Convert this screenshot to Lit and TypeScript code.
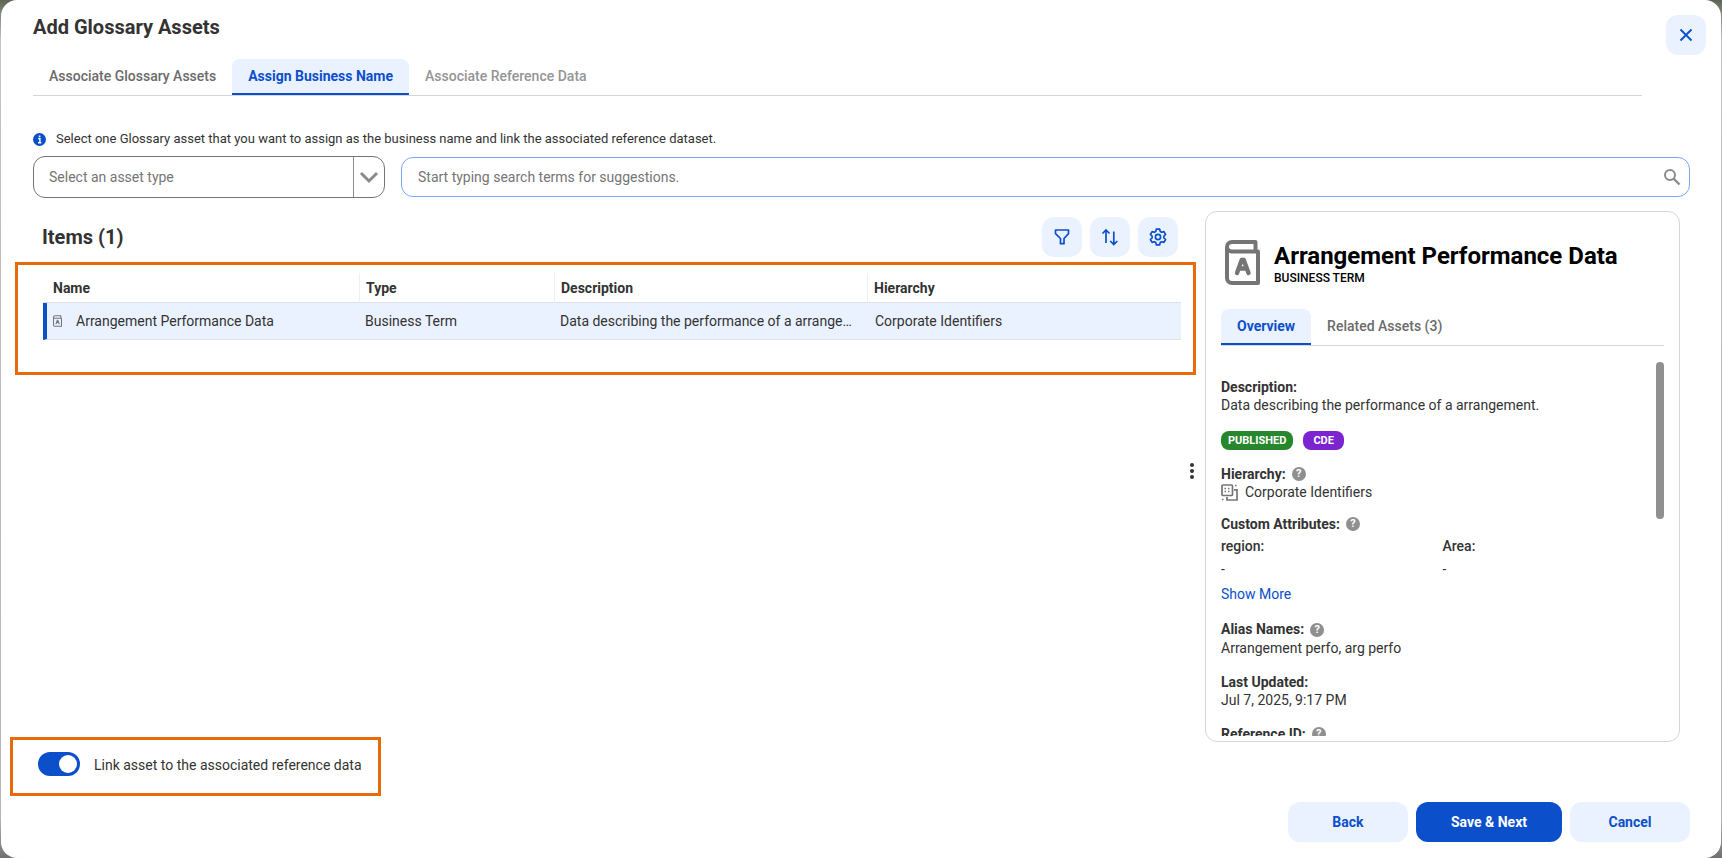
import { LitElement, html, css, svg } from "lit";
import { customElement, state } from "lit/decorators.js";
import { classMap } from "lit/directives/class-map.js";

const bookIcon = html`<svg class="book" viewBox="0 0 35 45" fill="none" stroke="currentColor" aria-hidden="true">
  <path d="M30.500 10V2H7a5 5 0 0 0-5 5v31a5 5 0 0 0 5 5h26V11.500H7A4.700 4.700 0 0 1 2 7" stroke-width="4" stroke-linejoin="round"/>
  <path d="M12 33l4.700-13h2.100L23.500 33M13.500 28.500h8" stroke-width="4.400" stroke-linecap="round" stroke-linejoin="round"/>
</svg>`;

const filterIcon = svg`<path d="M2.500 2h13v3.600L11 10.500v5.200H7.500v-5.200L2.500 5.600z" stroke-width="1.700" stroke-linejoin="round"/>`;
const sortIcon = svg`<path d="M5 15V2M1.500 5.500L5 2l3.500 3.500M12.800 3.500v13M9.300 13l3.500 3.500L16.300 13" stroke-width="1.700"/>`;
const gearIcon = svg`<path d="M7.300 1.200h3.400l.5 2.200 1.500.9 2.200-.7 1.700 2.900-1.700 1.600v1.800l1.700 1.600-1.700 2.900-2.200-.7-1.500.9-.5 2.200H7.300l-.5-2.200-1.500-.9-2.200.7-1.700-2.900 1.700-1.600V8.100L1.400 6.500l1.700-2.900 2.200.7 1.500-.9z" stroke-width="1.700" stroke-linejoin="round"/><circle cx="9" cy="9" r="2.600" stroke-width="1.700"/>`;

const shared = css`
  * { box-sizing: border-box; }
  button, input, select { font: inherit; color: inherit; }
  button { border: 0; background: none; padding: 0; cursor: pointer; }
  .tabs { display: flex; border-bottom: 1px solid #d6d6d6; }
  .tab {
    height: 36px; padding: 0 16px; font-size: 14px; font-weight: 500; color: #6b6b6b;
    border-bottom: 2px solid transparent; border-radius: 8px 8px 0 0;
  }
  .tab.active { color: #0b4fcb; background: linear-gradient(#0b4fcb, #0b4fcb) bottom / 100% 2px no-repeat border-box, #ebf2ff; font-weight: 700; }
  .tab:disabled { color: #959595; }
  .book { flex: none; color: #757575; }
`;

@customElement("asset-details")
class AssetDetails extends LitElement {
  static styles = [shared, css`
    :host {
      position: relative; display: flex; flex-direction: column; min-height: 0;
      border: 1px solid #d6d6d6; border-radius: 12px; padding: 28px 15px 5px;
    }
    .splitter {
      position: absolute; left: -19px; top: 246px; width: 10px; height: 26px;
      display: flex; flex-direction: column; align-items: center; justify-content: center; gap: 2px; cursor: col-resize;
    }
    .dot { width: 4px; height: 4px; border-radius: 50%; background: #333; }
    header { display: flex; gap: 14px; padding-left: 4px; color: #000; }
    header .book { width: 35px; height: 45px; }
    h2 { margin: 0; font-size: 24px; line-height: 32px; font-weight: 700; }
    .kind { font-size: 12px; line-height: 12px; font-weight: 500; }
    .tabs { margin-top: 24px; flex: none; }
    .scroller { position: relative; flex: 1; min-height: 0; overflow: hidden; padding-top: 32px; }
    .thumb { position: absolute; top: 16px; right: 0; width: 8px; height: 157px; border-radius: 4px; background: #909090; }
    dl { margin: 0; line-height: 18px; }
    dt { display: flex; align-items: center; gap: 6px; font-weight: 700; }
    dd { margin: 0 0 16px; }
    .badges { display: flex; gap: 10px; margin: 17px 0 15px; }
    .badge { padding: 0 7px; border-radius: 8px; line-height: 19px; font-size: 11px; font-weight: 700; color: #fff; }
    .published { background: #27872d; }
    .cde { background: #7c24cf; padding: 0 10px; }
    .help { width: 14px; height: 14px; border-radius: 50%; background: #8f8f8f; color: #fff; font-size: 11px; line-height: 14px; font-weight: 700; }
    .parent { display: flex; align-items: center; gap: 7px; margin-bottom: 14px; }
    .parent svg { width: 17px; height: 17px; }
    .pairs { display: grid; grid-template-columns: 1fr 1fr; row-gap: 5px; margin: 4px 0 6px; }
    .term { font-weight: 500; }
    .more { color: #0b4fcb; line-height: 20px; text-decoration: none; }
    .alias { margin-top: 16px; line-height: 19px; }
  `];

  @state() private tab = "Overview";

  private help(topic: string) {
    return html`<button class="help" aria-label="Help: ${topic}">?</button>`;
  }

  render() {
    return html`
      <button class="splitter" aria-label="Resize panels"><span class="dot"></span><span class="dot"></span><span class="dot"></span></button>
      <header>${bookIcon}<div><h2>Arrangement Performance Data</h2><div class="kind">BUSINESS TERM</div></div></header>
      <div class="tabs" role="tablist">
        ${["Overview", "Related Assets (3)"].map((t) => html`
          <button role="tab" class=${classMap({ tab: true, active: this.tab === t })} aria-selected=${this.tab === t} @click=${() => (this.tab = t)}>${t}</button>`)}
      </div>
      <div class="scroller">
        <div class="thumb"></div>
        <dl>
          <dt>Description:</dt><dd>Data describing the performance of a arrangement.</dd>
          <div class="badges"><span class="badge published">PUBLISHED</span><span class="badge cde">CDE</span></div>
          <dt>Hierarchy: ${this.help("Hierarchy")}</dt>
          <dd class="parent">
            <svg viewBox="0 0 17 17" fill="none" stroke="#757575" stroke-width="1.700" aria-hidden="true">
              <rect x="1" y="1" width="10.500" height="10.500" rx="1"/><path d="M13 5.800h3V16H6v-3"/>
              <path d="M3.500 4.500h2M7 4.500h2M3.500 7.500h2M7 7.500h2M14 1.500h2M1 15.500h2" stroke-dasharray="1.500 .5"/>
            </svg>Corporate Identifiers
          </dd>
          <dt>Custom Attributes: ${this.help("Custom Attributes")}</dt>
          <div class="pairs"><div class="term">region:</div><div class="term">Area:</div><div>-</div><div>-</div></div>
          <a class="more" href="#more">Show More</a>
          <dt class="alias">Alias Names: ${this.help("Alias Names")}</dt><dd>Arrangement perfo, arg perfo</dd>
          <dt>Last Updated:</dt><dd>Jul 7, 2025, 9:17 PM</dd>
          <dt>Reference ID: ${this.help("Reference ID")}</dt>
        </dl>
      </div>`;
  }
}

@customElement("app-root")
class AppRoot extends LitElement {
  static styles = [shared, css`
    :host {
      display: block; height: 100vh; padding: 0 1px 1px;
      background: linear-gradient(#5d6652, #c4c4c4 40px, #b5b5b5 calc(100% - 40px), #6e6e6e);
      font-family: Roboto, "Liberation Sans", sans-serif; font-size: 14px; color: #333;
    }
    .dialog { height: 100%; display: flex; flex-direction: column; background: #fff; border-radius: 16px; }
    .top { display: flex; gap: 24px; align-items: flex-start; padding: 15px 15px 0 32px; }
    .heading { flex: 1; }
    h1, h3 { margin: 0; font-size: 20px; font-weight: 700; line-height: 24px; }
    .top .tabs { margin-top: 20px; }
    .icon-btn { width: 40px; height: 40px; border-radius: 12px; background: #ebf2ff; color: #0b4fcb; display: grid; place-items: center; }
    .icon-btn svg { width: 18px; height: 18px; }
    .search { padding: 33px 31px 0 32px; }
    .hint { display: flex; align-items: center; gap: 10px; font-size: 13px; line-height: 20px; margin: 0 0 7px; }
    .hint svg { width: 13px; height: 13px; }
    .fields { display: flex; align-items: center; gap: 16px; }
    .select { position: relative; width: 352px; height: 42px; flex: none; }
    .select select { width: 100%; height: 100%; appearance: none; border: 1px solid #757575; border-radius: 12px; padding: 0 48px 0 15px; background: #fff; color: #757575; }
    .arrow { position: absolute; top: 1px; bottom: 1px; right: 1px; width: 31px; border-left: 1px solid #8c8c8c; display: grid; place-items: center; pointer-events: none; }
    .arrow svg { width: 20px; height: 20px; }
    .query { flex: 1; height: 40px; display: flex; align-items: center; border: 1px solid #7aa7f5; border-radius: 12px; padding: 0 8px 0 16px; }
    .query input { flex: 1; border: 0; outline: 0; padding: 0; background: none; }
    .query input::placeholder { color: #757575; opacity: 1; }
    .query button { height: 18px; }
    .query svg { width: 18px; height: 18px; }
    .main { flex: 1; min-height: 0; display: flex; gap: 9px; padding: 13px 41px 0 9px; }
    .results { flex: 1; min-width: 0; display: flex; flex-direction: column; padding-bottom: 1px; }
    .bar { display: flex; align-items: center; gap: 8px; padding: 6px 18px 5px 32px; }
    .bar h3 { flex: 1; }
    .grid-box { margin-left: 5px; border: 3px solid #e96a0a; padding: 8px 12px 32px 25px; }
    table { width: 100%; table-layout: fixed; border-collapse: separate; border-spacing: 0; }
    th, td { text-align: left; padding: 0 6px; overflow: hidden; text-overflow: ellipsis; white-space: nowrap; border-bottom: 1px solid #dfe1e6; }
    th { height: 30px; font-weight: 700; border-left: 1px solid #f0f0f0; }
    th:first-child { padding-left: 10px; border-left: 0; }
    td { height: 37px; background: #ebf2ff; }
    td:last-child { padding-left: 8px; }
    td:first-child { border-left: 4px solid #0b4fcb; }
    .c1 { width: 316px; } .c2 { width: 195px; } .c3 { width: 313px; }
    .name { display: flex; align-items: center; gap: 14px; }
    .name .book { width: 9px; height: 12px; }
    .link-box { margin-top: auto; align-self: flex-start; border: 3px solid #e96a0a; padding: 12px 16px 14px 25px; }
    .switch { display: flex; align-items: flex-start; gap: 14px; line-height: 27px; cursor: pointer; }
    .switch input { appearance: none; margin: 0; width: 42px; height: 24px; border-radius: 12px; background: #b0b0b0; display: flex; padding: 3px; }
    .switch input::before { content: ""; width: 18px; height: 18px; border-radius: 50%; background: #fff; }
    .switch input:checked { background: #0b4fcb; justify-content: flex-end; }
    asset-details { width: 475px; margin-bottom: 55px; flex: none; }
    footer { display: flex; justify-content: flex-end; gap: 8px; padding: 5px 31px 16px; }
    .btn { height: 40px; min-width: 120px; padding: 0 35px; border-radius: 12px; font-weight: 700; background: #ebf2ff; color: #0b4fcb; }
    .btn.primary { background: #0b4fcb; color: #fff; }
  `];

  @state() private tab = "Assign Business Name";

  private tool(label: string, shape: unknown) {
    return html`<button class="icon-btn" aria-label=${label}><svg viewBox="0 0 18 18" fill="none" stroke="currentColor">${shape}</svg></button>`;
  }

  render() {
    const tabs = ["Associate Glossary Assets", "Assign Business Name", "Associate Reference Data"];
    return html`
      <div class="dialog" role="dialog" aria-labelledby="title">
        <div class="top">
          <div class="heading">
            <h1 id="title">Add Glossary Assets</h1>
            <div class="tabs" role="tablist">
              ${tabs.map((t, i) => html`<button role="tab" ?disabled=${i === 2} aria-selected=${this.tab === t}
                class=${classMap({ tab: true, active: this.tab === t })} @click=${() => (this.tab = t)}>${t}</button>`)}
            </div>
          </div>
          ${this.tool("Close", svg`<path d="M3.500 3.500l11 11M14.500 3.500l-11 11" stroke-width="1.900"/>`)}
        </div>
        <div class="search">
          <p class="hint">
            <svg viewBox="0 0 13 13" aria-hidden="true"><circle cx="6.500" cy="6.500" r="6.500" fill="#0b4fcb"/><path d="M5.200 5.500h1.700v4M5 9.700h3.300M5.800 3.200h1.600" stroke="#fff" stroke-width="1.400" fill="none"/></svg>
            Select one Glossary asset that you want to assign as the business name and link the associated reference dataset.
          </p>
          <div class="fields">
            <div class="select">
              <select aria-label="Asset type"><option>Select an asset type</option><option>Business Term</option></select>
              <span class="arrow"><svg viewBox="0 0 20 20" fill="none" stroke="#8a8a8a" stroke-width="3"><path d="M2 6l8 8 8-8"/></svg></span>
            </div>
            <div class="query">
              <input type="text" aria-label="Search" placeholder="Start typing search terms for suggestions." />
              <button aria-label="Run search"><svg viewBox="0 0 18 18" fill="none" stroke="#8a8a8a" stroke-width="2"><circle cx="7" cy="7" r="5"/><path d="M10.500 10.500l6 6" stroke-width="2.400"/></svg></button>
            </div>
          </div>
        </div>
        <div class="main">
          <section class="results">
            <div class="bar"><h3>Items (1)</h3>${this.tool("Filter", filterIcon)}${this.tool("Sort", sortIcon)}${this.tool("Settings", gearIcon)}</div>
            <div class="grid-box">
              <table>
                <colgroup><col class="c1" /><col class="c2" /><col class="c3" /><col /></colgroup>
                <thead><tr><th>Name</th><th>Type</th><th>Description</th><th>Hierarchy</th></tr></thead>
                <tbody><tr>
                  <td><span class="name">${bookIcon}Arrangement Performance Data</span></td>
                  <td>Business Term</td><td>Data describing the performance of a arrangement.</td><td>Corporate Identifiers</td>
                </tr></tbody>
              </table>
            </div>
            <div class="link-box"><label class="switch"><input type="checkbox" role="switch" checked />Link asset to the associated reference data</label></div>
          </section>
          <asset-details></asset-details>
        </div>
        <footer><button class="btn">Back</button><button class="btn primary">Save &amp; Next</button><button class="btn">Cancel</button></footer>
      </div>`;
  }
}
